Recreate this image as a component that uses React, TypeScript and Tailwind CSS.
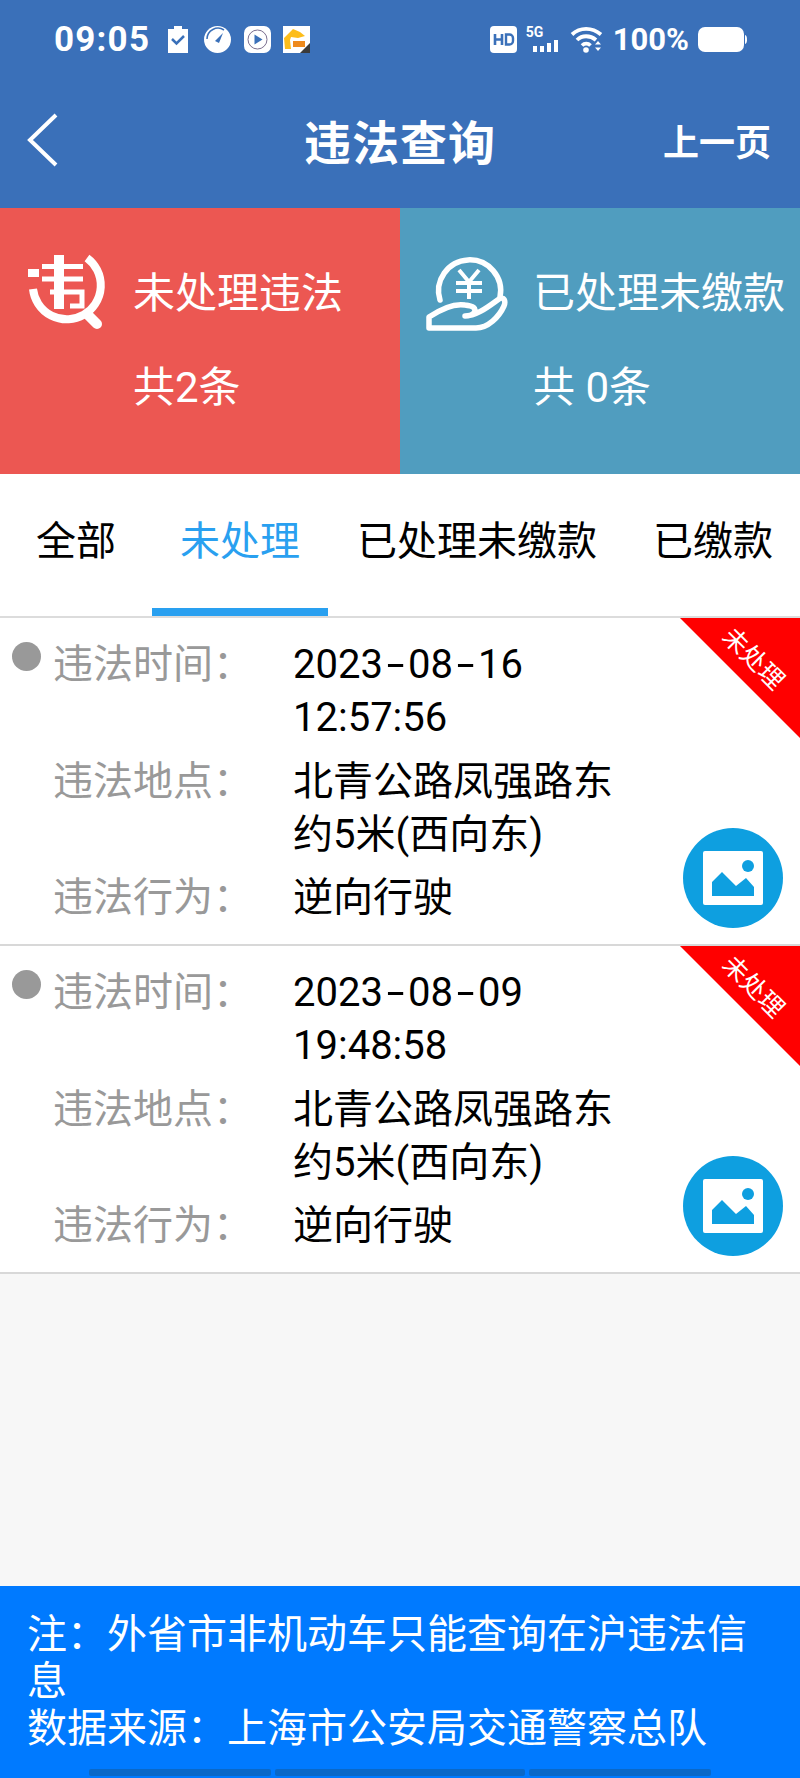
const FONT = "font-['Roboto','Noto_Sans_CJK_SC',sans-serif]";

function StatusBar() {
  return (
    <div className="flex h-[80px] items-center pl-[54px] pr-[53px] pb-[1px] text-white">
      <span className="w-[96px] text-[35px] leading-none font-bold tracking-[1.200px]">09:05</span>
      <svg className="ml-[18px]" width="20" height="27" viewBox="0 0 20 27">
        <path d="M0 3h6V0h8v3h6v24H0z" fill="#fff" />
        <path d="M4 13l4.500 4.500L16 10" fill="none" stroke="#3a70b9" strokeWidth="2.500" />
      </svg>
      <svg className="ml-[16px]" width="27" height="27" viewBox="0 0 27 27">
        <circle cx="13.500" cy="13.500" r="13.500" fill="#fff" />
        <path d="M3 13A11 11 0 0 1 20 4" fill="none" stroke="#3a70b9" strokeWidth="1.500" />
        <path d="M11 15l8-8-4 10z" fill="#3a70b9" />
      </svg>
      <svg className="ml-[13px]" width="27" height="27" viewBox="0 0 27 27">
        <rect width="27" height="27" rx="7" fill="#fff" />
        <circle cx="13.500" cy="13.500" r="9.500" fill="none" stroke="#7b6f8f" strokeWidth="1" />
        <path d="M10.500 8.500l8 5-8 5z" fill="#3a70b9" />
      </svg>
      <svg className="ml-[12px]" width="27" height="27" viewBox="0 0 27 27">
        <rect width="27" height="27" fill="#fff" />
        <path d="M1 12L10 3l7 3 5 4-7 2-7-1-1 3 1 9H2z" fill="#fdbd1a" />
        <rect x="10" y="15" width="12" height="6" fill="#ee8a1c" />
        <path d="M17 27l10-10v10z" fill="#3b3b3b" />
      </svg>
      <div className="flex-1" />
      <svg width="27" height="27" viewBox="0 0 27 27">
        <rect width="27" height="27" rx="4" fill="#fff" />
        <path d="M5 8v11M12 8v11M5 13.500h7" stroke="#3a70b9" strokeWidth="2.600" fill="none" />
        <path d="M16 8.500h3.500a3.500 3.500 0 0 1 3.500 3.500v3a3.500 3.500 0 0 1-3.500 3.500H16z" stroke="#3a70b9" strokeWidth="2.400" fill="none" />
      </svg>
      <div className="relative ml-[9px] h-[27px] w-[33px]">
        <span className="absolute left-0 top-[-1px] text-[14px] leading-[14px] font-bold">5G</span>
        <div className="absolute bottom-[1px] left-[7px] flex items-end gap-[3px]">
          <div className="h-[6px] w-[4px] bg-white" />
          <div className="h-[6px] w-[4px] bg-white" />
          <div className="h-[9px] w-[4px] bg-white" />
          <div className="h-[12px] w-[4px] bg-white" />
        </div>
      </div>
      <svg className="ml-[11px]" width="33" height="27" viewBox="0 0 33 27">
        <path d="M2 8.500C10 1 22 1 31 8.500" fill="none" stroke="#fff" strokeWidth="3.800" />
        <path d="M7 14C12 9 20 9 26 14" fill="none" stroke="#fff" strokeWidth="3.800" />
        <path d="M12 19.500c2.500-2.400 6-2.400 8.500 0" fill="none" stroke="#fff" strokeWidth="3.800" />
        <circle cx="16" cy="24" r="2.800" fill="#fff" />
        <path d="M28 15l3 3.500h-6zM28 25l3-3.500h-6z" fill="#fff" />
      </svg>
      <span className="ml-[10px] text-[31px] leading-none font-bold">100%</span>
      <svg className="ml-[9px]" width="49" height="25" viewBox="0 0 49 25">
        <rect width="46" height="25" rx="7" fill="#fff" />
        <path d="M47 8c1.500.5 2 2 2 4.500s-.5 4-2 4.500z" fill="#fff" />
      </svg>
    </div>
  );
}

function Header() {
  return (
    <div className="h-[208px] bg-[#3a70b9] text-white">
      <StatusBar />
      <div className="relative flex h-[128px] items-start justify-center pt-[34px]">
        <button className="absolute left-[27px] top-[33px]">
          <svg width="32" height="54" viewBox="0 0 32 54">
            <path d="M29 2L3 27l26 25" fill="none" stroke="#fff" strokeWidth="4" />
          </svg>
        </button>
        <span className="text-[47px] leading-[60px] font-bold tracking-[1px]">违法查询</span>
        <span className="absolute right-[29px] top-[42px] text-[36px] leading-[44px] font-bold">上一页</span>
      </div>
    </div>
  );
}

function WeiIcon() {
  return (
    <svg width="78" height="80" viewBox="28 253 78 80">
      <path d="M87 258a34 34 0 1 1-54 31" fill="none" stroke="#fff" strokeWidth="8" />
      <path d="M88 315l9 9" stroke="#fff" strokeWidth="10" strokeLinecap="round" />
      <path d="M59 255v54" stroke="#fff" strokeWidth="10" fill="none" />
      <path d="M42 266.500h41M42 279h41M50 292h32v14H70" stroke="#fff" strokeWidth="5" fill="none" />
      <rect x="28" y="269" width="11" height="8" fill="#fff" />
    </svg>
  );
}

function HandIcon() {
  return (
    <svg width="82" height="80" viewBox="426 254 82 80">
      <path d="M440 300a31 31 0 1 1 60-3" fill="none" stroke="#fff" strokeWidth="5.500" strokeLinecap="round" />
      <path
        d="M429 317c12-8 24-14 36-12 8 1 12 3 9 8-2 2-5 3-9 3 12 0 24-10 34-17 5-3 7 2 5 7-5 11-16 22-28 22h-47z"
        fill="#509dbf"
        stroke="#fff"
        strokeWidth="5.500"
        strokeLinejoin="round"
      />
      <path d="M459 270l10 12 10-12M456 283h26M456 291h26M469 282v17" fill="none" stroke="#fff" strokeWidth="4" />
    </svg>
  );
}

function StatCards() {
  return (
    <div className="flex h-[266px] text-white">
      <div className="flex w-[400px] bg-[#ec5752] pl-[28px] pt-[45px]">
        <WeiIcon />
        <div className="ml-[27px] pt-[14px] text-[42px] leading-[54px]">
          <div>未处理违法</div>
          <div className="mt-[40px]">共2条</div>
        </div>
      </div>
      <div className="flex flex-1 bg-[#509dbf] pl-[26px] pt-[46px]">
        <HandIcon />
        <div className="ml-[25px] pt-[13px] text-[42px] leading-[54px]">
          <div>已处理未缴款</div>
          <div className="mt-[40px]">共 0条</div>
        </div>
      </div>
    </div>
  );
}

function Tabs() {
  return (
    <div className="grid h-[144px] grid-cols-[152px_176px_298px_174px] border-b-2 border-[#dcdcdc] bg-white text-center text-[40px] leading-[54px] text-black">
      <div className="pt-[41px]">全部</div>
      <div className="h-[142px] border-b-[8px] border-[#29a0f0] pt-[41px] text-[#29a0f0]">未处理</div>
      <div className="pt-[41px]">已处理未缴款</div>
      <div className="pt-[41px]">已缴款</div>
    </div>
  );
}

function Field({ label, children, className }: { label: string; children: React.ReactNode; className?: string }) {
  return (
    <div className={`flex text-[40px] leading-[53px] ${className ?? ""}`}>
      <div className="w-[240px] shrink-0 text-[#999999]">{label}</div>
      <div className="w-[325px] text-black">{children}</div>
    </div>
  );
}

function DateTime({ parts, time }: { parts: string[]; time: string }) {
  return (
    <>
      {parts[0]}
      <span className="inline-block scale-x-[1.600] px-[7px]">-</span>
      {parts[1]}
      <span className="inline-block scale-x-[1.600] px-[7px]">-</span>
      {parts[2]} {time}
    </>
  );
}

function Row({ parts, time }: { parts: string[]; time: string }) {
  return (
    <div className="relative h-[328px] border-b-2 border-[#d8d8d8] bg-white pl-[53px] pt-[20px]">
      <div className="absolute left-[12px] top-[24px] h-[29px] w-[29px] rounded-full bg-[#999999]" />
      <Field label="违法时间：">
        <DateTime parts={parts} time={time} />
      </Field>
      <Field label="违法地点：" className="mt-[11px]">北青公路凤强路东约5米(西向东)</Field>
      <Field label="违法行为：" className="mt-[10px]">逆向行驶</Field>
      <div className="absolute right-0 top-0 h-[120px] w-[120px] overflow-hidden bg-[#ff0000] [clip-path:polygon(0_0,100%_0,100%_100%)]">
        <span className="absolute left-[33px] top-[26px] w-[80px] rotate-45 text-center text-[25px] leading-[30px] text-white">未处理</span>
      </div>
      <div className="absolute bottom-[16px] right-[17px] flex h-[100px] w-[100px] items-center justify-center rounded-full bg-[#0e9fe0]">
        <svg width="60" height="54" viewBox="0 0 60 54">
          <rect width="60" height="54" rx="2" fill="#fff" />
          <circle cx="45" cy="15" r="6" fill="#0e9fe0" />
          <path d="M9 45V31l10-10 14 14 10-8 8 9v9z" fill="#0e9fe0" />
        </svg>
      </div>
    </div>
  );
}

function Footer() {
  return (
    <div className="relative h-[192px] bg-[#007aff] px-[27px] pt-[25px] text-[40px] leading-[47px] text-white">
      <div>注：外省市非机动车只能查询在沪违法信息</div>
      <div>数据来源：上海市公安局交通警察总队</div>
      <div className="absolute bottom-[2px] left-[89px] flex gap-[4px]">
        <div className="h-[7px] w-[182px] rounded-[2px] bg-[#0a68c8]" />
        <div className="h-[7px] w-[250px] rounded-[2px] bg-[#0a68c8]" />
        <div className="h-[7px] w-[182px] rounded-[2px] bg-[#0a68c8]" />
      </div>
    </div>
  );
}

export default function App() {
  return (
    <div className={`flex h-[1778px] w-[800px] flex-col overflow-hidden bg-[#f7f7f7] ${FONT}`}>
      <Header />
      <StatCards />
      <Tabs />
      <Row parts={["2023", "08", "16"]} time="12:57:56" />
      <Row parts={["2023", "08", "09"]} time="19:48:58" />
      <div className="flex-1" />
      <Footer />
    </div>
  );
}
